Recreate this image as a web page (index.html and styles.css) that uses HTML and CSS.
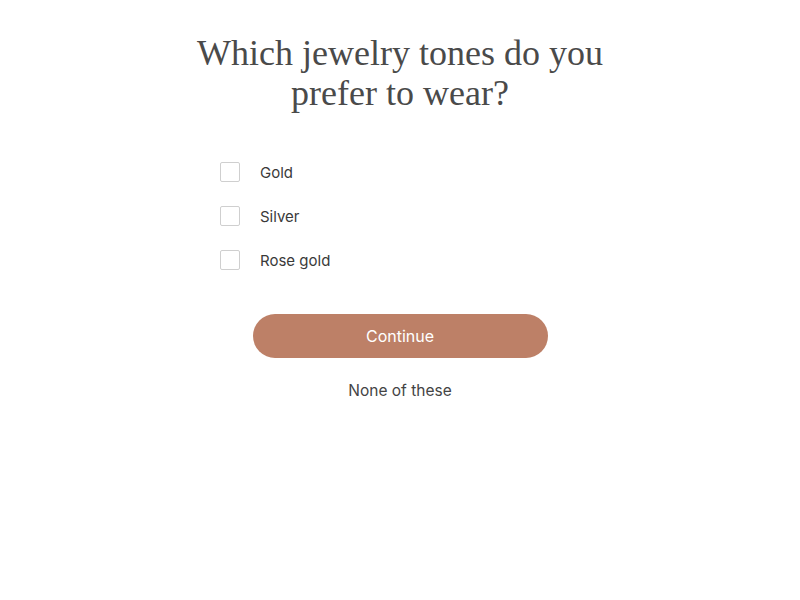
FILE: index.html
```html
<!DOCTYPE html>
<html>
<head>
<meta charset="utf-8">
<link rel="stylesheet" href="styles.css">
</head>
<body>
<main class="quiz">
  <h1 class="title">Which jewelry tones do you<br>prefer to wear?</h1>
  <ul class="options">
    <li class="option"><span class="box"></span><span class="label">Gold</span></li>
    <li class="option"><span class="box"></span><span class="label">Silver</span></li>
    <li class="option"><span class="box"></span><span class="label">Rose gold</span></li>
  </ul>
  <button class="continue">Continue</button>
  <a class="none">None of these</a>
</main>
</body>
</html>
```
FILE: styles.css
```css
html, body {
  margin: 0;
  padding: 0;
  background: #fff;
}
.quiz {
  display: flex;
  flex-direction: column;
  align-items: center;
  padding-top: 33px;
}
.title {
  margin: 0;
  font-family: "Liberation Serif", serif;
  font-weight: normal;
  font-size: 36px;
  line-height: 40px;
  color: #4a4a4a;
  text-align: center;
}
.options {
  list-style: none;
  margin: 49px 0 0 0;
  padding: 0;
  width: 360px;
  display: flex;
  flex-direction: column;
  gap: 24px;
}
.option {
  display: flex;
  align-items: center;
  gap: 20px;
  height: 20px;
}
.box {
  width: 18px;
  height: 18px;
  border: 1px solid #cfcfcf;
  border-radius: 2px;
  background: #fff;
}
.label {
  font-family: "Inter", sans-serif;
  font-size: 15px;
  color: #3a3a3a;
}
.continue {
  margin-top: 44px;
  width: 295px;
  height: 44px;
  border: none;
  border-radius: 22px;
  background: #bd8067;
  color: #fff;
  font-family: "Inter", sans-serif;
  font-size: 16px;
  padding: 0;
}
.none {
  margin-top: 23px;
  font-family: "Inter", sans-serif;
  font-size: 15.5px;
  color: #444;
  line-height: 20px;
}
```
